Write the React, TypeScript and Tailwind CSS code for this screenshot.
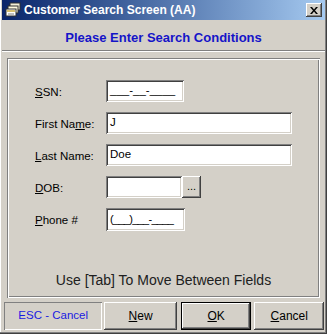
const raised = "shadow-[inset_-1px_-1px_#404040,inset_1px_1px_#ffffff,inset_-2px_-2px_#808080]";
const sunken = "shadow-[inset_1px_1px_#808080,inset_-1px_-1px_#ffffff,inset_2px_2px_#404040,inset_-2px_-2px_#d4d0c8]";
const etched = "shadow-[inset_1px_1px_#808080,inset_-1px_-1px_#ffffff,inset_2px_2px_#ffffff,inset_-2px_-2px_#808080]";

type RowProps = {
  label: React.ReactNode;
  children: React.ReactNode;
};

function Row({ label, children }: RowProps) {
  return (
    <div className="flex h-[22px] items-center">
      <div className="w-[71px] pt-[3px] text-[11.5px] text-black">{label}</div>
      {children}
    </div>
  );
}

function TextBox({ width, value }: { width: string; value: string }) {
  return (
    <div
      className={`${width} ${sunken} flex h-[22px] items-center overflow-hidden whitespace-nowrap bg-white pl-[4px] text-[11.5px] text-black`}
    >
      {value}
    </div>
  );
}

function AppIcon() {
  return (
    <svg width="16" height="16" viewBox="0 0 16 16">
      <rect x="5" y="1" width="10" height="7" fill="#f4f0d8" stroke="#303030" strokeWidth="1" />
      <rect x="3" y="4" width="10" height="7" fill="#fffbe0" stroke="#303030" strokeWidth="1" />
      <rect x="1" y="7" width="10" height="7" fill="#ffffff" stroke="#303030" strokeWidth="1" />
      <rect x="2" y="8" width="8" height="2" fill="#d8c070" />
      <line x1="3" y1="12" x2="9" y2="12" stroke="#808080" />
    </svg>
  );
}

export default function App() {
  return (
    <div
      className="flex h-[334px] w-[327px] flex-col bg-[#d4d0c8] px-[2px] pb-[3px] shadow-[inset_-1px_-1px_#404040,inset_-2px_-2px_#808080,inset_1px_0_#ffffff]"
      style={{ fontFamily: '"Liberation Sans", Arial, sans-serif' }}
    >
      <div className="flex h-[20px] items-center bg-gradient-to-r from-[#0a246a] to-[#a6caf0] pl-[3px] pr-[3px]">
        <AppIcon />
        <span className="ml-[3px] text-[12px] font-bold text-white">Customer Search Screen (AA)</span>
        <div className={`ml-auto flex h-[14px] w-[16px] items-center justify-center bg-[#d4d0c8] ${raised}`}>
          <svg width="8" height="7" viewBox="0 0 8 7">
            <path d="M0 0h2l2 2.5 2-2.5h2l-3 3.5 3 3.5h-2l-2-2.5-2 2.5h-2l3-3.5z" fill="#000" />
          </svg>
        </div>
      </div>

      <div className="flex h-[30px] items-center justify-center pt-[5px]">
        <span className="text-[13px] font-bold text-[#1414c8]">Please Enter Search Conditions</span>
      </div>
      <div className="h-[1px] bg-[#808080]" />
      <div className="h-[1px] bg-white" />

      <div className={`mx-[5px] mt-[6px] flex h-[240px] flex-col ${etched}`}>
        <div className="flex flex-col gap-[10px] pl-[28px] pt-[22px]">
          <Row
            label={
              <>
                <u>S</u>SN:
              </>
            }
          >
            <TextBox width="w-[78px]" value="___-__-____" />
          </Row>
          <Row
            label={
              <>
                First Na<u>m</u>e:
              </>
            }
          >
            <TextBox width="w-[186px]" value="J" />
          </Row>
          <Row
            label={
              <>
                <u>L</u>ast Name:
              </>
            }
          >
            <TextBox width="w-[186px]" value="Doe" />
          </Row>
          <Row
            label={
              <>
                <u>D</u>OB:
              </>
            }
          >
            <div className="flex">
              <TextBox width="w-[76px]" value="" />
              <div className={`flex h-[22px] w-[19px] items-center justify-center bg-[#d4d0c8] pb-[2px] text-[11px] ${raised}`}>
                ...
              </div>
            </div>
          </Row>
          <Row
            label={
              <>
                <u>P</u>hone #
              </>
            }
          >
            <div
              className={`w-[79px] ${sunken} flex h-[23px] items-center overflow-hidden whitespace-nowrap bg-white pl-[4px] text-[11px] tracking-[-0.7px] text-black`}
            >
              (___)___-____
            </div>
          </Row>
        </div>
        <div className="mt-auto pb-[7px] text-center text-[14px] text-[#202020]">Use [Tab] To Move Between Fields</div>
      </div>

      <div className="mt-[4px] flex h-[28px] items-stretch pl-[2px] pr-[1px]">
        <div className="flex w-[99px] items-center justify-center text-[11.5px] text-[#1a1ae0] shadow-[inset_1px_1px_#808080,inset_-1px_-1px_#ffffff]">
          ESC - Cancel
        </div>
        <div className={`ml-[2px] flex w-[73px] items-center justify-center text-[12px] text-black ${raised}`}>
          <span>
            <u>N</u>ew
          </span>
        </div>
        <div className="ml-[4px] flex w-[71px] border border-black">
          <div className={`flex flex-1 items-center justify-center text-[12px] text-black ${raised}`}>
            <span>
              <u>O</u>K
            </span>
          </div>
        </div>
        <div className={`ml-[3px] flex w-[70px] items-center justify-center text-[12px] text-black ${raised}`}>
          <span>
            <u>C</u>ancel
          </span>
        </div>
      </div>
    </div>
  );
}
